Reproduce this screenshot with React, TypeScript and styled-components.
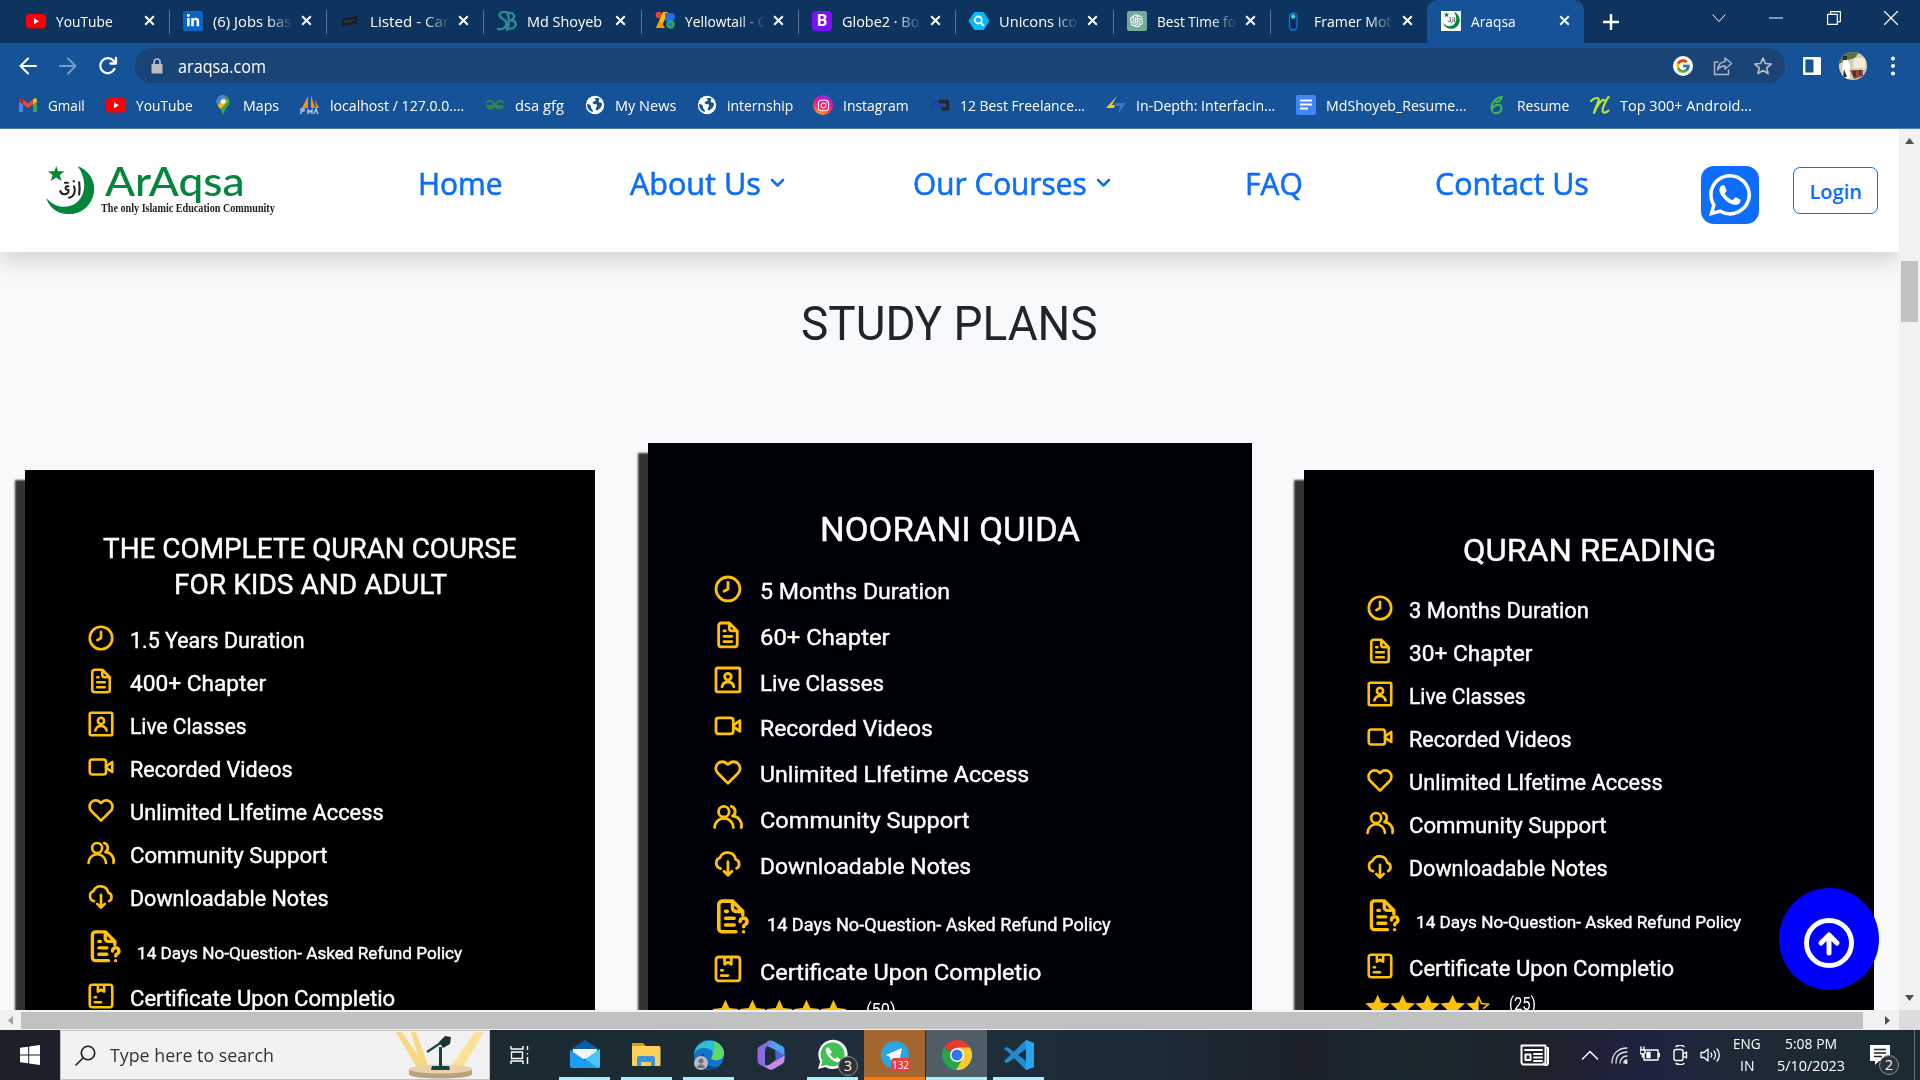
import React, { useLayoutEffect, useRef, useState, ReactNode } from 'react';
import styled, { createGlobalStyle } from 'styled-components';
import { FcGoogle } from 'react-icons/fc';
import { FaWhatsapp, FaLinkedinIn, FaInstagram } from 'react-icons/fa';
import { AiOutlineOpenAI } from 'react-icons/ai';

const UI = '"Open Sans", "Noto Sans", sans-serif';
const DISPLAY = 'Roboto, "Liberation Sans", sans-serif';

const Global = createGlobalStyle`
  * { box-sizing: border-box; }
  html, body { margin: 0; padding: 0; overflow: hidden; }
  body { font-family: ${UI}; }
  svg { display: block; flex: none; }
`;

/* ---------- text set to a known measure ---------- */
const FitBox = styled.span<{ $w: number }>`
  display: inline-block;
  flex: none;
  width: ${(p) => p.$w}px;
  white-space: nowrap;
  text-align: left;
`;
const FitInner = styled.span`
  display: inline-block;
  transform-origin: 0 50%;
`;
function Fit({ w, children }: { w: number; children: ReactNode }) {
  const ref = useRef<HTMLSpanElement>(null);
  const [scale, setScale] = useState(1);
  useLayoutEffect(() => {
    if (ref.current) setScale(w / ref.current.offsetWidth);
  }, [w]);
  return (
    <FitBox $w={w}>
      <FitInner ref={ref} style={{ transform: `scaleX(${scale})` }}>{children}</FitInner>
    </FitBox>
  );
}

/* ---------- browser chrome ---------- */
const Screen = styled.div`
  width: 1920px;
  height: 1080px;
  overflow: hidden;
  display: flex;
  flex-direction: column;
`;
const TabStrip = styled.div`
  height: 43px;
  flex: none;
  display: flex;
  align-items: stretch;
  padding-left: 11.5px;
  background: #0c345f;
  color: #fff;
`;
const Tab = styled.div<{ $active?: boolean; $line?: boolean }>`
  position: relative;
  width: 157.3px;
  flex: none;
  display: flex;
  align-items: center;
  padding: 0 0 2px 14px;
  background: ${(p) => (p.$active ? '#155298' : 'transparent')};
  border-radius: 10px 10px 0 0;
  &::after {
    content: '';
    display: ${(p) => (p.$line ? 'block' : 'none')};
    position: absolute;
    right: -1px;
    top: 10px;
    width: 1px;
    height: 24px;
    background: #5b7696;
  }
`;
const TabTitle = styled.div<{ $fade?: boolean }>`
  width: 80px;
  margin-left: 10px;
  font-size: 15px;
  line-height: 20px;
  overflow: hidden;
  mask-image: ${(p) => (p.$fade ? 'linear-gradient(90deg,#000 68%,transparent 100%)' : 'none')};
`;
const TabClose = styled.div`
  margin-left: 8px;
`;
const StripTail = styled.div`
  flex: 1;
  display: flex;
  align-items: center;
  padding-left: 19px;
`;
const WindowButtons = styled.div`
  margin-left: auto;
  display: flex;
  align-items: center;
  gap: 43.5px;
  padding: 0 22px 7px 0;
`;
const Toolbar = styled.div`
  height: 46px;
  flex: none;
  display: flex;
  align-items: center;
  background: #155298;
  padding: 0 0 1px 18px;
`;
const NavButtons = styled.div`
  display: flex;
  gap: 20px;
  width: 117px;
`;
const Omnibox = styled.div`
  width: 1650px;
  height: 35px;
  border-radius: 18px;
  background: #1a4475;
  display: flex;
  align-items: center;
  padding: 0 12px 0 15px;
  color: #fff;
  font-size: 17.5px;
  line-height: 24px;
`;
const Url = styled.div`
  flex: 1;
  margin-left: 14px;
`;
const OmniIcons = styled.div`
  display: flex;
  align-items: center;
  gap: 20px;
`;
const ToolbarEnd = styled.div`
  display: flex;
  align-items: center;
  padding-left: 18px;
`;
const Avatar = styled.div`
  width: 28px;
  height: 28px;
  margin: 0 24px 0 18px;
  border-radius: 50%;
  overflow: hidden;
`;
const Bookmarks = styled.div`
  height: 40px;
  flex: none;
  display: flex;
  align-items: center;
  gap: 20.7px;
  padding: 0 0 7px 18px;
  background: #155298;
  border-bottom: 1px solid #4c7db4;
  color: #fff;
  font-size: 15px;
  line-height: 20px;
`;
const Bookmark = styled.div`
  display: flex;
  align-items: center;
  gap: 10px;
  height: 24px;
`;
const Squircle = styled.div<{ $bg: string; $r?: number }>`
  width: 20px;
  height: 20px;
  flex: none;
  border-radius: ${(p) => p.$r ?? 2}px;
  background: ${(p) => p.$bg};
  color: #fff;
  display: flex;
  align-items: center;
  justify-content: center;
  font: 700 16px/20px ${DISPLAY};
`;

/* ---------- page ---------- */
const Browser = styled.div`
  height: 881px;
  flex: none;
  display: flex;
`;
const Viewport = styled.div`
  width: 1899px;
  overflow: hidden;
  background: #f8f9fb;
`;
const SiteNav = styled.header`
  height: 123px;
  display: flex;
  align-items: flex-start;
  background: #fff;
  box-shadow: 0 10px 20px rgba(0, 0, 0, 0.15);
  padding-left: 46px;
  color: #0d6efd;
`;
const Logo = styled.div`
  display: flex;
  width: 372px;
  padding-top: 37px;
`;
const LogoWords = styled.div`
  display: flex;
  flex-direction: column;
  padding-left: 6px;
`;
const LogoName = styled.div`
  padding-left: 4px;
  font: 500 41px/38px Lato, sans-serif;
  color: #03853b;
  margin-top: -4px;
`;
const LogoTag = styled.div`
  font: 700 11.5px/12px "Liberation Serif", serif;
  color: #222;
  margin-top: 1.5px;
`;
const Menu = styled.nav`
  display: flex;
  align-items: center;
  height: 44px;
  margin-top: 32px;
  font: 500 31px/44px ${UI};
  -webkit-text-stroke: 0.6px #0d6efd;
`;
const MenuItem = styled.a<{ $gap: number }>`
  display: flex;
  align-items: center;
  gap: 9px;
  margin-right: ${(p) => p.$gap}px;
`;
const WhatsApp = styled.div`
  width: 58px;
  height: 58px;
  margin-top: 37px;
  border-radius: 13px;
  background: #0d6efd;
  color: #fff;
  display: flex;
  align-items: center;
  justify-content: center;
`;
const Login = styled.div`
  width: 85px;
  height: 47px;
  margin: 38px 0 0 34px;
  border: 1.5px solid #0d6efd;
  border-radius: 7px;
  display: flex;
  align-items: center;
  justify-content: center;
  padding-top: 2px;
  font: 600 20px/28px ${UI};
`;
const Heading = styled.h1`
  margin: 42px 0 0;
  text-align: center;
  font: 400 49px/60px ${DISPLAY};
  color: #212529;
`;
const Plans = styled.div`
  display: flex;
  align-items: flex-start;
  padding: 89px 0 0 25px;
`;
const Card = styled.section<{ $w: number; $scale: number; $bg: string; $top: number; $left: number; $pad: number }>`
  width: ${(p) => p.$w}px;
  height: 700px;
  flex: none;
  font-size: ${(p) => p.$scale * 10}px;
  background: ${(p) => p.$bg};
  color: #fff;
  margin: ${(p) => p.$top}px 0 0 ${(p) => p.$left}px;
  padding-top: ${(p) => p.$pad}px;
  box-shadow: -10px 10px 2px #333;
`;
const CardTitle = styled.h2<{ $size: number; $lh: number; $gap: number }>`
  display: flex;
  flex-direction: column;
  align-items: center;
  margin: 0 0 ${(p) => p.$gap}px;
  font: 400 ${(p) => p.$size}px/${(p) => p.$lh}px ${DISPLAY};
  -webkit-text-stroke: 0.4px #fff;
`;
const Row = styled.div<{ $tall?: boolean }>`
  height: ${(p) => (p.$tall ? 5.7 : 4.3)}em;
  display: flex;
  align-items: center;
  padding-left: 6.05em;
  svg {
    width: ${(p) => (p.$tall ? 3.85 : 3)}em;
    height: ${(p) => (p.$tall ? 3.85 : 3)}em;
    color: #ffc107;
    margin-top: -0.4em;
  }
`;
const RowText = styled.div<{ $small?: boolean }>`
  margin: ${(p) => (p.$small ? '0.65em 0 0 0.75em' : '0.1em 0 0 0.68em')};
  font: 400 ${(p) => (p.$small ? 1.68 : 2.12)}em/1.3 ${DISPLAY};
  -webkit-text-stroke: 0.4px #fff;
`;
const Stars = styled.div`
  display: flex;
  align-items: flex-start;
  padding: 0.45em 0 0 6.05em;
  svg { width: 2.53em; height: 2.53em; color: #ffc107; }
`;
const Votes = styled.div`
  margin-left: 1.05em;
  font: 400 1.75em/1.25 ${DISPLAY};
`;
const BackToTop = styled.div`
  position: absolute;
  left: 1779px;
  top: 888px;
  width: 100px;
  height: 102px;
  border-radius: 50%;
  background: #0000ff;
  display: flex;
  justify-content: center;
  padding-top: 25px;
`;
const VBar = styled.div`
  width: 21px;
  display: flex;
  flex-direction: column;
  align-items: center;
  background: #f1f1f1;
  padding: 9px 0;
`;
const VThumb = styled.div`
  width: 17px;
  height: 61px;
  margin: 117px 0 auto;
  background: #c1c1c1;
`;
const HBar = styled.div`
  height: 20px;
  flex: none;
  display: flex;
  align-items: center;
  background: #f1f1f1;
  padding-left: 8px;
`;
const HThumb = styled.div`
  width: 1842px;
  height: 17px;
  margin: 0 22px 0 8px;
  background: #c1c1c1;
`;
const Corner = styled.div`
  width: 21px;
  height: 20px;
  margin-left: auto;
  background: #dcdcdc;
`;

/* ---------- taskbar ---------- */
const Taskbar = styled.div`
  height: 50px;
  flex: none;
  display: flex;
  background: linear-gradient(90deg, #1d1f29 0, #1d1f29 3%, #1a2a30 26%, #1f2e3b 45%, #1c2b38 60%, #1b2029 68%, #1a292f 73%, #1d212a 80%, #1f2240 86%, #1e2937 90%, #1b2c31 100%);
  color: #fff;
`;
const Start = styled.div`
  width: 60px;
  display: flex;
  align-items: center;
  justify-content: center;
`;
const Search = styled.div`
  width: 430px;
  display: flex;
  align-items: center;
  background: #f2f2f2;
  border: 1px solid #c4c4c4;
  padding-left: 14px;
  color: #333;
  font-size: 19px;
  line-height: 28px;
`;
const SearchText = styled.div`
  margin: 0 122px 0 14px;
`;
const Task = styled.div<{ $w: number; $left?: number; $bg?: string; $line?: string }>`
  position: relative;
  width: ${(p) => p.$w}px;
  margin-left: ${(p) => p.$left ?? 0}px;
  flex: none;
  display: flex;
  align-items: center;
  justify-content: center;
  padding-top: 2px;
  background: ${(p) => p.$bg ?? 'transparent'};
  border-bottom: 3px solid ${(p) => p.$line ?? 'transparent'};
`;
const Badge = styled.div<{ $red?: boolean; $right?: number; $bottom?: number }>`
  position: absolute;
  display: flex;
  align-items: center;
  justify-content: center;
  right: ${(p) => p.$right ?? 1}px;
  bottom: ${(p) => p.$bottom ?? 2}px;
  width: ${(p) => (p.$red ? 19 : 20)}px;
  height: ${(p) => (p.$red ? 13 : 20)}px;
  border-radius: ${(p) => (p.$red ? 4 : 10)}px;
  border: ${(p) => (p.$red ? 'none' : '1px solid #8c9296')};
  background: ${(p) => (p.$red ? '#ee3b3b' : '#2e3236')};
  font: 400 ${(p) => (p.$red ? 10 : 14)}px/1 ${UI};
`;
const Tray = styled.div`
  margin-left: auto;
  display: flex;
  align-items: center;
`;
const TrayIcons = styled.div`
  display: flex;
  align-items: center;
  gap: 10px;
  margin: 0 13px 0 30px;
`;
const TrayText = styled.div<{ $w: number }>`
  width: ${(p) => p.$w}px;
  display: flex;
  flex-direction: column;
  align-items: center;
  font-size: 15px;
  line-height: 22px;
  padding-bottom: 2px;
`;
const Notices = styled.div`
  position: relative;
  width: 44px;
  height: 50px;
  display: flex;
  align-items: center;
  margin-left: 9px;
`;
const ShowDesktop = styled.div`
  width: 6px;
  height: 50px;
  border-left: 1px solid #69737b;
`;

/* ---------- icons ---------- */
const Line = ({ s = 20, h, vb = '0 0 24 24', w = 2, c = 'currentColor', children }: any) => (
  <svg width={s} height={h ?? s} viewBox={vb} fill="none" stroke={c} strokeWidth={w} strokeLinecap="round" strokeLinejoin="round">{children}</svg>
);
const Cross = () => <Line s={11} vb="0 0 11 11" w={2}><path d="M1.2 1.2l8.6 8.6M9.8 1.2L1.2 9.8" strokeLinecap="butt" /></Line>;
const YouTube = () => (
  <svg width="20" height="20" viewBox="0 0 20 20"><rect y="3" width="20" height="14.5" rx="4" fill="#f00" /><path d="M8 7.3v6l5-3z" fill="#fff" /></svg>
);
const Listed = () => <svg width="20" height="20" viewBox="0 0 20 20"><path d="M2 8l14-3 2 1-2 7-14 2z" fill="#1a1d22" /><path d="M4 11l11-2" stroke="#3b3e42" strokeWidth="2" strokeDasharray="1.5 .8" /></svg>;
const Monogram = () => (
  <Line s={20} vb="0 0 20 20" w={2.3} c="#2f8a95"><path d="M9 1C3 0 1 4 4 6.500s7 4 5 8-6 4-9 3M10 1c2.500 5 2.500 13 0 18M11 2c6-1 8 4 4 6.500M12 9.500c8-1.500 8 6 4 7.500-3 1-5 .5-6 0" /></Line>
);
const Yellowtail = () => (
  <svg width="20" height="20" viewBox="0 0 20 20"><circle cx="4" cy="4" r="3.3" fill="#ea4335" /><path d="M8 1h5L6 17H1z" fill="#fbbc05" /><path d="M5 9l5 8H2z" fill="#f29900" /><path d="M10 2h6a4 4 0 010 8h-6z" fill="#1a73e8" /><circle cx="15.5" cy="13.5" r="4.3" fill="#34a853" /><circle cx="15.500" cy="13.500" r="2" fill="#1a73e8" /></svg>
);
const Unicons = () => (
  <svg width="20" height="20" viewBox="0 0 20 20"><path d="M5.5 1.5h9L20 10l-5.500 8.500h-9L0 10z" fill="#07b9fb" stroke="#07b9fb" strokeLinejoin="round" /><circle cx="9.300" cy="9" r="3.500" fill="none" stroke="#fff" strokeWidth="1.800" /><path d="M12 12l3 3" stroke="#fff" strokeWidth="2" /></svg>
);
const Framer = () => <svg width="20" height="20" viewBox="0 0 20 20"><rect x="5.500" y="2" width="7.500" height="17" rx="3.700" fill="#0d2a68" stroke="#1676d8" strokeWidth="1.300" /><circle cx="9.200" cy="5.500" r="2.200" fill="#35e0b0" /></svg>;
const Crescent = ({ s }: { s: number }) => (
  <svg width={s} height={s} viewBox="0 0 48 48">
    <path d="M31 0C44 5 50 18 46 30 42 42 31 48 20 47 10 46 3 40 0 31c6 7 15 11 24 8 13-4 19-22 7-39z" fill="#03853b" />
    <path d="M10 0l1.700 5.200H18l-4.500 3.600 1.800 6-5.300-3.500-5.300 3.500 1.800-6L2 5.200h6.300z" fill="#03853b" />
    <path d="M32.500 16c.6 4 .6 8 0 12M27.500 20c2 5 0 10-5 11M22 20c-3-1.500-4.500 3.500 0 3.500 1 5-7 5.500-8 1M27 15h.500M18.500 16.500h3" fill="none" stroke="#222" strokeWidth="2" strokeLinecap="round" />
  </svg>
);
const Gmail = () => (
  <svg width="20" height="20" viewBox="0 0 20 20"><path d="M1 5v12h4V8z" fill="#4285f4" /><path d="M15 8v9h4V5z" fill="#34a853" /><path d="M5 4.500v5l5 3.700 5-3.700v-5l-5 4z" fill="#ea4335" /><path d="M1 5c0-2 2-2.500 4-.500v5L1 6.500z" fill="#c5221f" /><path d="M19 5c0-2-2-2.500-4-.500v5l4-3z" fill="#fbbc04" /></svg>
);
const Maps = () => (
  <svg width="20" height="20" viewBox="0 0 20 20"><path d="M10 0a6.500 6.500 0 00-6.500 6.500c0 5 4.500 6 6.500 13.500 2-7.500 6.500-8.500 6.500-13.500A6.500 6.500 0 0010 0z" fill="#34a853" /><path d="M4.800 10.500l8-9.700A6.500 6.500 0 003.500 6.500c0 1.600.5 2.900 1.300 4z" fill="#4285f4" /><path d="M3.700 5a6.500 6.500 0 011.500-3L8 5z" fill="#ea4335" /><path d="M4.800 10.500L11 3l3.500 3.500L7.500 14z" fill="#fbbc04" /><circle cx="10" cy="6.500" r="2.300" fill="#fff" /></svg>
);
const Pma = () => (
  <svg width="20" height="20" viewBox="0 0 20 20"><path d="M8 1v12H2zM11 0l4 13h-4zM15 5l4 8h-3z" fill="#f29111" /><path d="M1 19v-5h3v2H2M8 19v-4l2 2 2-2v4M14 19l2-5 2 5" stroke="#bfc5dc" fill="none" strokeWidth="1.400" /></svg>
);
const Gfg = () => (
  <Line s={20} vb="0 0 20 20" w={1.8} c="#2f8d46"><path d="M2 7c3-2 7-1 7 3s-5 5-7 1h16c-2 4-7 3-7-1s4-5 7-3" /></Line>
);
const Globe = () => (
  <svg width="20" height="20" viewBox="0 0 20 20"><circle cx="10" cy="10" r="9.200" fill="#fff" /><path d="M8 3c4 0 3 3 1 3.500S7 9 10 9s2 3 1 4 0 3 2 2c2-2 4-3 4-6 0-2-2-1-3-2s1-3 0-4M2 9c2 0 4 1 4 3s2 2 2 5c-4-1-6-4-6-8z" fill="#155298" /></svg>
);
const Cycle = () => <Line s={20} vb="0 0 20 20" w={3.4}><path d="M2.500 14V7H7l4 5" stroke="#2440a0" strokeLinecap="butt" /><path d="M9 6.500h8.500V14h-6" stroke="#26262e" strokeLinecap="butt" /></Line>;
const Bolt = () => <svg width="20" height="20" viewBox="0 0 20 20"><path d="M11 1L0 13h8l1-3H6z" fill="#f9c414" /><path d="M9 8h11l-8 11 2-8H9z" fill="#2f7ad0" /></svg>;
const Docs = () => <Line s={12} vb="0 0 12 12" w={2}><path d="M0 1.500h12M0 5.500h12M0 9.500h8" strokeLinecap="butt" /></Line>;
const Leaf = () => <Line s={20} vb="0 0 20 20" w={2} c="#47b649"><path d="M15 2C8 3 4 8 4.500 14a5 4.600 0 1010-1c-.5-5-7-4-9 .5M14.500 3c-1 3-3 4-5.500 4" /></Line>;
const Scribble = () => <Line s={20} vb="0 0 20 20" w={2.2} c="#b7e23a"><path d="M1 6c4-4 9-4 7.500 0C7 10 5 14 4 18c3-8 8-14 10-13M18.500 2c-3 4-7 12-5.500 15 1.500 1.500 4 0 5.500-1.500" /></Line>;

type IconKey = 'clock' | 'file' | 'live' | 'video' | 'heart' | 'users' | 'cloud' | 'refund' | 'cert';
const PATHS: Record<IconKey, ReactNode> = {
  clock: <><circle cx="12" cy="12" r="9" /><path d="M12 7v5l-2.900 1.700" /></>,
  file: <path d="M13 3H7a2 2 0 00-2 2v14a2 2 0 002 2h10a2 2 0 002-2V9zM13 3.500V7a2 2 0 002 2h3.500M9 9h1M9 13h6M9 17h6" />,
  live: <><rect x="3" y="3" width="18" height="18" rx="1" /><circle cx="12" cy="9.500" r="2.500" /><path d="M7.500 17.200a4.600 4.600 0 019 0" /></>,
  video: <><rect x="3" y="6" width="13" height="12" rx="2" /><path d="M16 11.500l5-3.500v8l-5-3.500" /></>,
  heart: <path d="M12 20.500l-7.700-7.700a4.900 4.900 0 010-7 4.900 4.900 0 017 0l.7.700.7-.700a4.900 4.900 0 017 0 4.900 4.900 0 010 7z" />,
  users: <><circle cx="8.900" cy="8" r="4" /><path d="M2 20a7 7 0 0114 0M14.500 4a4 4 0 011 7.300A7 7 0 0122 20" /></>,
  cloud: <path d="M6.500 16.200A4.300 4.300 0 016 8a6.200 6.200 0 0111.800 1.300 3.700 3.700 0 01.7 6.800M12 11v10M9 18.300l3 3 3-3" />,
  refund: <path d="M14 21H6a2 2 0 01-2-2V5a2 2 0 012-2h6l6 6v2M12 3.500V7a2 2 0 002 2h3.500M8 9h1M8 13h5M8 17h5M16.500 15a2 2 0 113 1.700c-.700.400-1 .700-1 1.300M18.500 21v0" />,
  cert: <path d="M5 3h14a2 2 0 012 2v14a2 2 0 01-2 2H5a2 2 0 01-2-2V5a2 2 0 012-2zM9.500 3.500v5L12 7l2.500 1.500v-5M7 13h1M7 17h5" />,
};
const Star = ({ half }: { half?: boolean }) => {
  const d = 'M12 .6l3.400 7.400 8.300.9-6.200 5.500 1.800 8.200-7.300-4.300-7.300 4.300 1.800-8.200L.3 8.900 8.600 8z';
  return (
    <svg viewBox="0 0 24 24">
      {half ? <><path d="M12 .6v17.700l-7.300 4.300 1.800-8.200L.3 8.900 8.600 8z" fill="currentColor" /><path d="M12 3l2.600 6 6.600.7-5 4.300" fill="none" stroke="currentColor" strokeWidth="1.500" /></> : <path d={d} fill="currentColor" />}
    </svg>
  );
};

/* ---------- data ---------- */
const TABS: { icon: ReactNode; t: string; w: number; fade?: boolean }[] = [
  { icon: <YouTube />, t: 'YouTube', w: 57 },
  { icon: <Squircle $bg="#0a66c2"><FaLinkedinIn size={14} /></Squircle>, t: '(6) Jobs bas', w: 78, fade: true },
  { icon: <Listed />, t: 'Listed - Car', w: 79, fade: true },
  { icon: <Monogram />, t: 'Md Shoyeb', w: 75 },
  { icon: <Yellowtail />, t: 'Yellowtail - C', w: 81, fade: true },
  { icon: <Squircle $bg="#7a12f8" $r={4}>B</Squircle>, t: 'Globe2 · Bo', w: 77, fade: true },
  { icon: <Unicons />, t: 'Unicons ico', w: 78, fade: true },
  { icon: <Squircle $bg="#74aa9c"><AiOutlineOpenAI size={17} /></Squircle>, t: 'Best Time fo', w: 79, fade: true },
  { icon: <Framer />, t: 'Framer Mot', w: 77, fade: true },
  { icon: <Squircle $bg="#fff" $r={0}><Crescent s={17} /></Squircle>, t: 'Araqsa', w: 45 },
];
const MARKS: [ReactNode, string, number][] = [
  [<Gmail />, 'Gmail', 37],
  [<YouTube />, 'YouTube', 57],
  [<Maps />, 'Maps', 36],
  [<Pma />, 'localhost / 127.0.0....', 134.500],
  [<Gfg />, 'dsa gfg', 49],
  [<Globe />, 'My News', 61],
  [<Globe />, 'internship', 66],
  [<Squircle $r={10} $bg="linear-gradient(200deg,#7b2ff7,#f0189a 45%,#fb3b45 65%,#ffc830)"><FaInstagram size={13} /></Squircle>, 'Instagram', 66],
  [<Cycle />, '12 Best Freelance...', 125],
  [<Bolt />, 'In-Depth: Interfacin...', 139.500],
  [<Squircle $bg="#4285f4"><Docs /></Squircle>, 'MdShoyeb_Resume...', 140.500],
  [<Leaf />, 'Resume', 52],
  [<Scribble />, 'Top 300+ Android...', 131.500],
];
const MENU: { t: string; w: number; gap: number; drop?: boolean }[] = [
  { t: 'Home', w: 85, gap: 127 },
  { t: 'About Us', w: 131, gap: 128, drop: true },
  { t: 'Our Courses', w: 174, gap: 134, drop: true },
  { t: 'FAQ', w: 58, gap: 132 },
  { t: 'Contact Us', w: 154, gap: 112 },
];
const KEYS: IconKey[] = ['clock', 'file', 'live', 'video', 'heart', 'users', 'cloud'];
const REST = ['Live Classes', 'Recorded Videos', 'Unlimited LIfetime Access', 'Community Support', 'Downloadable Notes'];
const SMALL_W = [117, 163, 254, 198, 199];
const LARGE_W = [124, 173, 269, 210, 211];
const PLANS = [
  { w: 570, scale: 1, bg: '#000', top: 27, left: 0, pad: 61, title: [['THE COMPLETE QURAN COURSE', 414], ['FOR KIDS AND ADULT', 273]] as [string, number][], size: 28.5, lh: 36, gap: 15.5, items: ['1.5 Years Duration', '400+ Chapter', ...REST], widths: [175, 136, ...SMALL_W], refund: 325, cert: 265, votes: '', vw: 0, half: false },
  { w: 604, scale: 1.0635, bg: '#000008', top: 0, left: 53, pad: 65.5, title: [['NOORANI QUIDA', 260]] as [string, number][], size: 34, lh: 40, gap: 19.5, items: ['5 Months Duration', '60+ Chapter', ...REST], widths: [190, 130, ...LARGE_W], refund: 344, cert: 281, votes: '(50)', vw: 30, half: false },
  { w: 570, scale: 1, bg: '#000005', top: 27, left: 52, pad: 60, title: [['QURAN READING', 253]] as [string, number][], size: 32, lh: 40, gap: 18, items: ['3 Months Duration', '30+ Chapter', ...REST], widths: [180, 123, ...SMALL_W], refund: 325, cert: 265, votes: '(25)', vw: 27, half: true },
];

const Feature = ({ icon, text, w, tall }: { icon: IconKey; text: string; w: number; tall?: boolean }) => (
  <Row $tall={tall}>
    <Line w={2.1}>{PATHS[icon]}</Line>
    <RowText $small={tall}><Fit w={w}>{text}</Fit></RowText>
  </Row>
);

/* ---------- taskbar icons ---------- */
const Podium = () => (
  <svg width="88" height="47" viewBox="0 0 88 47">
    <path d="M0 0h6l30 44H26zM15 0h5l16 44h-8z" fill="#f9cf5c" opacity=".75" /><path d="M88 0h-9L48 44h14z" fill="#fbe08a" opacity=".85" />
    <path d="M13 37v5c0 6 63 6 63 0v-5z" fill="#b8a27c" /><ellipse cx="44.500" cy="37" rx="31.500" ry="4.500" fill="#e6d3ac" />
    <path d="M36 34h17l1 4H35zM43 15h3v20h-3z" fill="#17433f" /><path d="M31 20l15-10" stroke="#1e4a45" strokeWidth="2.500" /><path d="M43 10l6-6 6 1-1 7-7 4z" fill="#1a3532" />
  </svg>
);
const Mail = () => <svg width="30" height="29" viewBox="0 0 30 29"><path d="M0 10L15 0l15 10v5H0z" fill="#0a5cad" /><path d="M3 9h24v10H3z" fill="#f4f4f4" /><path d="M0 10l15 10 15-10v16a2 2 0 01-2 2H2a2 2 0 01-2-2z" fill="#1c9ff0" /><path d="M15 19L30 9v17a2 2 0 01-2 2z" fill="#44c8f7" /></svg>;
const Explorer = () => <svg width="29" height="24" viewBox="0 0 29 24"><path d="M0 0h11l3 3h-2v6H0z" fill="#e09c0c" /><path d="M1 3h26a1.500 1.500 0 011.500 1.500V22a1 1 0 01-1 1H1a1 1 0 01-1-1V4a1 1 0 011-1z" fill="#fdd05a" /><path d="M5 23v-8a2 2 0 012-2h14a2 2 0 012 2v8h-4v-4H9v4z" fill="#3a94dd" /></svg>;
const Edge = () => (
  <svg width="32" height="30" viewBox="0 0 32 30"><circle cx="16" cy="15" r="15" fill="#1173c9" /><path d="M1 14C3-2 26-4 30.500 10c2 7-3 11-9 10-3-1-3-2-2-4 2-5-3-8-8-8C6 8 3 10 1 14z" fill="#2fc1d0" /><path d="M20 1c7 2 11 7 11 12 0 6-5 8-10 7-3-1-3-2-2-4 4-7 3-11 1-15z" fill="#5fd868" /><path d="M11 13c-2 7 3 14 12 14 3 0 5-1 6-2-5 6-17 7-21-1-2-5 0-9 3-11z" fill="#0b4690" /><circle cx="8" cy="23" r="7" fill="#b9bdc0" /><circle cx="8" cy="21" r="2.500" fill="#6f7478" /><path d="M4 28c0-5 8-5 8 0z" fill="#6f7478" /></svg>
);
const Office = () => (
  <svg width="28" height="30" viewBox="0 0 28 30">
    <path d="M10 1.500C12 0 15 0 17 1.500l8 4.500c2 1 2.500 2.500 2.500 4.500v8l-9-4.500v-4L10 6z" fill="#4f9ff0" />
    <path d="M13 .5L3 6C1 7.200.5 8.500.5 10.500v10c0 2 1 3.500 3 4.500l6 2c-1.500-2-1.500-4-1.500-6v-8c0-6 2-8 7-9z" fill="#8a6be0" />
    <path d="M27.500 16v3.500c0 2-1 3.500-2.500 4.500l-8 4.800c-2 1.200-4 1.200-6 0l-6-3.500c5 1 7-.3 9-1.800l5-3.500c2-1.500 1-4 0-6z" fill="#c48af0" />
    <path d="M18.500 10l9 5.500-9 5.500z" fill="#4a5fd0" />
  </svg>
);
const WhatsLogo = () => <svg width="31" height="31" viewBox="0 0 31 31"><path d="M1 30l2.200-7.500A14.600 14.600 0 1116 30c-3 0-5.500-.600-7.500-2z" fill="#fff" /><path d="M4 27l1.500-5A12 12 0 1110 26z" fill="#41c152" /><path d="M11 8c-4 2-2 7 2 11s9 6 11 2l-4-3-2 2c-2-1-4-3-5-5l2-2z" fill="#fff" /></svg>;
const Telegram = () => <svg width="28" height="28" viewBox="0 0 28 28"><circle cx="14" cy="14" r="14" fill="#2ca5e0" /><path d="M5 14l16-7-3 14-5-4-3 3-1-4z" fill="#fff" /></svg>;
const Chrome = () => <svg width="30" height="30" viewBox="0 0 30 30"><path d="M15 15L2 7.500a15 15 0 0126 0z" fill="#e33b2e" /><path d="M15 15h-2L2 7.500A15 15 0 0014 30l7.500-11z" fill="#2ba24c" /><path d="M15 7.500h13A15 15 0 0114 30l7-12z" fill="#fcc934" /><circle cx="15" cy="15" r="7" fill="#fff" /><circle cx="15" cy="15" r="5.500" fill="#2f78e8" /></svg>;
const Code = () => <svg width="30" height="30" viewBox="0 0 30 30"><path d="M22 0l8 3v24l-8 3L3 11l-3-2 2-2 3 1 17 13V9L5 22l-3 1-2-2z" fill="#1f8ad2" /><path d="M22 0l8 3v24l-8 3z" fill="#2ba4ee" /></svg>;

export default function App() {
  return (
    <Screen>
      <Global />
      <TabStrip>
        {TABS.map((t, i) => (
          <Tab key={t.t} $active={i === 9} $line={i < 8}>
            {t.icon}
            <TabTitle $fade={t.fade}><Fit w={t.w}>{t.t}</Fit></TabTitle>
            <TabClose><Cross /></TabClose>
          </Tab>
        ))}
        <StripTail>
          <Line s={16} vb="0 0 16 16" w={2.4}><path d="M8 .8v14.400M.8 8h14.400" /></Line>
          <WindowButtons>
            <Line s={14} vb="0 0 14 14" w={1}><path d="M1 4l6 6.500L13 4" /></Line>
            <Line s={14} vb="0 0 14 14" w={1.200}><path d="M.5 7h13" /></Line>
            <Line s={14} vb="0 0 14 14" w={1.200}><path d="M.6 3.400h9.700v9.900H.6zM3.500 3V.6h9.900v10h-2.700" /></Line>
            <Line s={14} vb="0 0 14 14" w={1.200}><path d="M.5.5l13 13M13.500.5l-13 13" /></Line>
          </WindowButtons>
        </StripTail>
      </TabStrip>
      <Toolbar>
        <NavButtons>
          <Line s={20} vb="0 0 20 20" w={2.100} c="#fff"><path d="M18 10H3M10 2.500L2.500 10l7.500 7.500" /></Line>
          <Line s={20} vb="0 0 20 20" w={1.900} c="#7c9dc6"><path d="M2 10h15M10 2.500l7.500 7.500-7.500 7.500" /></Line>
          <Line s={20} vb="0 0 20 20" w={2.300} c="#fff"><path d="M16.500 13A7.500 7.500 0 1115.500 4.800L17.500 7M18 2v5.500h-5.500" /></Line>
        </NavButtons>
        <Omnibox>
          <svg width="14" height="16" viewBox="0 0 14 16"><path d="M1.500 6h11v9.500h-11z" fill="#b8bcc0" /><path d="M4 7V4a3 3 0 016 0v3" fill="none" stroke="#b8bcc0" strokeWidth="1.700" /></svg>
          <Url><Fit w={88}>araqsa.com</Fit></Url>
          <OmniIcons>
            <Squircle $bg="#fff" $r={10}><FcGoogle size={16} /></Squircle>
            <Line s={20} vb="0 0 20 20" w={1.500} c="#a9b6c6"><path d="M5 6H1.500v12.500h14V14M12 2l6.500 5.500-6.500 5.500v-3c-4 0-6 1-7.500 4 .5-5 3.500-8 7.500-8.500z" /></Line>
            <Line s={20} vb="0 0 24 24" w={2} c="#b5bec9"><path d="M12 2.500l2.800 6.500 7 .6-5.300 4.600 1.600 6.900-6.100-3.700-6.100 3.700 1.600-6.900L2.200 9.600l7-.6z" /></Line>
          </OmniIcons>
        </Omnibox>
        <ToolbarEnd>
          <Line s={18} vb="0 0 18 18" w={2.400} c="#fff"><path d="M1.200 1.200h15.600v15.600H1.200z" /><path d="M13.500 1v16" strokeWidth="6" strokeLinecap="butt" /></Line>
          <Avatar>
            <svg width="28" height="28" viewBox="0 0 28 28"><path fill="#d9cdb3" d="M0 0h28v28H0z" /><path fill="#5d7048" d="M0 0h20l-4 6L5 9 0 12z" /><path fill="#f4ecd8" d="M15 6h11v10H14z" /><path fill="#fff" d="M4 8l4-1 3 6v14H3z" /><path fill="#2d2a27" d="M4 4h4v4H4zM5 17l3 8H4z" /><path fill="#9b4a32" d="M11 18h13v6l-9 3z" /><path fill="#3a3a40" d="M14 19h3v6h-3zM20 18h2v5h-2z" /></svg>
          </Avatar>
          <svg width="4" height="20" viewBox="0 0 4 20"><circle cx="2" cy="2.500" r="2" fill="#fff" /><circle cx="2" cy="10" r="2" fill="#fff" /><circle cx="2" cy="17.500" r="2" fill="#fff" /></svg>
        </ToolbarEnd>
      </Toolbar>
      <Bookmarks>
        {MARKS.map(([icon, t, w], i) => <Bookmark key={i}>{icon}<Fit w={w}>{t}</Fit></Bookmark>)}
      </Bookmarks>
      <Browser>
        <Viewport>
          <SiteNav>
            <Logo>
              <Crescent s={49} />
              <LogoWords>
                <LogoName><Fit w={139}>ArAqsa</Fit></LogoName>
                <LogoTag><Fit w={174}>The only Islamic Education Community</Fit></LogoTag>
              </LogoWords>
            </Logo>
            <Menu>
              {MENU.map((m) => (
                <MenuItem key={m.t} $gap={m.gap}>
                  <Fit w={m.w}>{m.t}</Fit>
                  {m.drop && <Line s={15} h={12} vb="0 0 15 12" w={2.500}><path d="M2 3l5.500 5.500L13 3" /></Line>}
                </MenuItem>
              ))}
            </Menu>
            <WhatsApp><FaWhatsapp size={48} /></WhatsApp>
            <Login><Fit w={52}>Login</Fit></Login>
          </SiteNav>
          <Heading><Fit w={297}>STUDY PLANS</Fit></Heading>
          <Plans>
            {PLANS.map((p) => (
              <Card key={p.bg} $w={p.w} $scale={p.scale} $bg={p.bg} $top={p.top} $left={p.left} $pad={p.pad}>
                <CardTitle $size={p.size} $lh={p.lh} $gap={p.gap}>
                  {p.title.map(([t, w]) => <Fit key={t} w={w}>{t}</Fit>)}
                </CardTitle>
                {p.items.map((t, i) => <Feature key={t} icon={KEYS[i]} text={t} w={p.widths[i]} />)}
                <Feature tall icon="refund" text="14 Days No-Question- Asked Refund Policy" w={p.refund} />
                <Feature icon="cert" text="Certificate Upon Completio" w={p.cert} />
                {p.votes && (
                  <Stars>
                    {[0, 1, 2, 3, 4].map((n) => <Star key={n} half={p.half && n === 4} />)}
                    <Votes><Fit w={p.vw}>{p.votes}</Fit></Votes>
                  </Stars>
                )}
              </Card>
            ))}
          </Plans>
          <BackToTop>
            <svg width="60" height="60" viewBox="0 0 60 60" fill="none" stroke="#fff"><circle cx="30" cy="30" r="22.500" strokeWidth="5" /><path d="M30 40V23M22 30l8-8 8 8" strokeWidth="5" strokeLinecap="round" strokeLinejoin="round" /></svg>
          </BackToTop>
        </Viewport>
        <VBar>
          <svg width="9" height="6" viewBox="0 0 9 6"><path d="M4.500 0L9 6H0z" fill="#505050" /></svg>
          <VThumb />
          <svg width="9" height="6" viewBox="0 0 9 6"><path d="M0 0h9L4.500 6z" fill="#505050" /></svg>
        </VBar>
      </Browser>
      <HBar>
        <svg width="5" height="9" viewBox="0 0 5 9"><path d="M5 0v9L0 4.500z" fill="#a3a3a3" /></svg>
        <HThumb />
        <svg width="5" height="9" viewBox="0 0 5 9"><path d="M0 0l5 4.500L0 9z" fill="#505050" /></svg>
        <Corner />
      </HBar>
      <Taskbar>
        <Start>
          <svg width="20" height="20" viewBox="0 0 20 20" fill="#fff"><path d="M0 2.800l8.200-1.100v7.800H0zM9.200 1.500L20 0v9.500H9.200zM0 10.500h8.200v7.800L0 17.200zM9.200 10.500H20V20L9.200 18.500z" /></svg>
        </Start>
        <Search>
          <Line s={21} vb="0 0 21 21" w={1.600} c="#1c1c1c"><circle cx="13" cy="8" r="6.700" /><path d="M8 13l-7 7" /></Line>
          <SearchText><Fit w={164}>Type here to search</Fit></SearchText>
          <Podium />
        </Search>
        <Task $w={22} $left={19}>
          <Line s={22} vb="0 0 22 22" w={1.400}><path d="M2 2v3h12V2M2 20v-3h12v3M2.500 8h11v6.500h-11zM18.500 2v4M18.500 13v7M18.500 9v1.500" strokeLinecap="butt" /></Line>
        </Task>
        <Task $w={51} $left={28} $line="#a9f0fa"><Mail /></Task>
        <Task $w={51} $left={11} $line="#a9f0fa"><Explorer /></Task>
        <Task $w={51} $left={11} $line="#a9f0fa"><Edge /></Task>
        <Task $w={51} $left={11}><Office /></Task>
        <Task $w={51} $left={11} $line="#a9f0fa"><WhatsLogo /><Badge $right={0} $bottom={1}>3</Badge></Task>
        <Task $w={61} $left={6} $bg="#a4662f" $line="#ff7a00"><Telegram /><Badge $red $right={15} $bottom={6}>132</Badge></Task>
        <Task $w={61} $left={1} $bg="#4e5d66" $line="#a9f0fa"><Chrome /></Task>
        <Task $w={51} $left={6} $line="#a9f0fa"><Code /></Task>
        <Tray>
          <Line s={30} h={22} vb="0 0 30 22" w={2}><path d="M1.500 1.500h24v19H3a2 2 0 01-1.500-2zM25.500 4H28v14.500a2 2 0 01-4 1M5 6h17M14 10h8M14 13.500h8M14 17h8M5.500 10.500h5v5.500h-5z" /></Line>
          <TrayIcons>
            <Line s={20} vb="0 0 20 20" w={1.500}><path d="M2.500 14L10 6.500l7.500 7.500" /></Line>
            <Line s={20} vb="0 0 20 20" w={1.300} c="#dfe3e6"><path d="M2 18C2 9 8 3 17 3M6 18c0-7 4-11 11-11M10 18c0-4 3-7 7-7M14 18c0-2 1-3 3-3" /><circle cx="16" cy="17.500" r="1" fill="#fff" /></Line>
            <Line s={20} vb="0 0 20 20" w={1.400}><path d="M6 5h12v10H4v-5M19.500 8.500v3M1 2v3M4 2v3M0 5h5v2c0 2-2 2-2.500 2S0 9 0 7zM2.500 9v3" /><path d="M7 7.500h3v5H7z" fill="#fff" /></Line>
            <Line s={20} vb="0 0 20 20" w={1.400}><rect x="4" y="4.500" width="9" height="11" rx="2" /><path d="M13 9l3.500-2v6L13 11M6 1.500c3-1.500 6-1.500 8 0M6 18.500c3 1.500 6 1.500 8 0" /></Line>
            <Line s={20} vb="0 0 20 20" w={1.300}><path d="M1 7.500h3L8 4v12l-4-3.500H1zM11 8c1 1 1 3 0 4M14 6c2 2 2 6 0 8M17 4c3 3 3 9 0 12" /></Line>
          </TrayIcons>
          <TrayText $w={28}><Fit w={28}>ENG</Fit><Fit w={14}>IN</Fit></TrayText>
          <TrayText $w={100}><Fit w={52}>5:08 PM</Fit><Fit w={68}>5/10/2023</Fit></TrayText>
          <Notices>
            <svg width="20" height="20" viewBox="0 0 20 20"><path d="M0 0h20v16H9l-4 4v-4H0z" fill="#fff" /><path d="M4 4.500h12M4 8h12M4 11.500h8" stroke="#1b2c31" strokeWidth="1.300" /></svg>
            <Badge $right={15} $bottom={5}>2</Badge>
          </Notices>
          <ShowDesktop />
        </Tray>
      </Taskbar>
    </Screen>
  );
}
